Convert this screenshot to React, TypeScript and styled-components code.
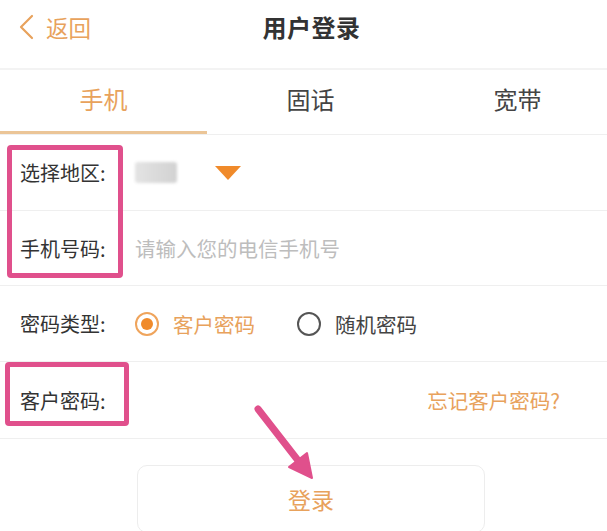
import React from "react";
import styled, { createGlobalStyle } from "styled-components";

const Global = createGlobalStyle`
  html, body { margin: 0; padding: 0; background: #fff; overflow: hidden; }
  body { font-family: "Noto Sans CJK SC", "Noto Sans", sans-serif; color: #333; }
`;

const ORANGE = "#E8A25C";
const ORANGE_STRONG = "#F08A2A";
const PINK = "#E0508C";
const LINE = "#EFEFEF";

const Page = styled.div`
  position: relative;
  width: 607px;
  height: 531px;
  overflow: hidden;
`;

const Header = styled.header`
  display: grid;
  grid-template-columns: 1fr auto 1fr;
  align-items: start;
  height: 70px;
  padding: 11px 0 0 16px;
  box-sizing: border-box;
  border-bottom: 2px solid #F3F3F3;
`;

const Back = styled.div`
  display: flex;
  align-items: center;
  gap: 12px;
  margin-left: 2px;
  color: ${ORANGE};
  font-size: 22.5px;
  line-height: 32px;
  svg { display: block; }
`;

const Title = styled.h1`
  margin: 0;
  font-size: 24px;
  font-weight: 600;
  line-height: 32px;
  color: #333;
  letter-spacing: 0.5px;
`;

const Tabs = styled.nav`
  display: grid;
  grid-template-columns: 207px 207px 207px;
  height: 65px;
  border-bottom: 1px solid ${LINE};
  box-sizing: border-box;
`;

const Tab = styled.div<{ $active?: boolean }>`
  display: flex;
  align-items: center;
  justify-content: center;
  padding-bottom: 4px;
  font-size: 24px;
  color: ${(p) => (p.$active ? ORANGE : "#444")};
  border-bottom: 3px solid ${(p) => (p.$active ? "#EBC597" : "transparent")};
`;

const Row = styled.div<{ $h: number }>`
  display: flex;
  align-items: center;
  height: ${(p) => p.$h}px;
  border-bottom: 1px solid ${LINE};
  padding: 0 47px 0 20px;
  box-sizing: border-box;
`;

const Label = styled.span`
  width: 115px;
  flex: none;
  font-size: 20px;
  color: #333;
`;

const Blurred = styled.div`
  width: 42px;
  height: 21px;
  border-radius: 3px;
  background: linear-gradient(90deg, #e4e4e4 0%, #dcdcdc 40%, #d2d2d2 100%);
  filter: blur(1.5px);
`;

const Caret = styled.div`
  margin-left: 38px;
  width: 0;
  height: 0;
  border-left: 13px solid transparent;
  border-right: 13px solid transparent;
  border-top: 14px solid ${ORANGE_STRONG};
`;

const Placeholder = styled.span`
  font-size: 20.5px;
  color: #BDBDBD;
`;

const RadioGroup = styled.div`
  display: flex;
  align-items: center;
  gap: 42px;
`;

const RadioItem = styled.label<{ $checked?: boolean }>`
  display: flex;
  align-items: center;
  gap: 14px;
  font-size: 20.5px;
  color: ${(p) => (p.$checked ? ORANGE : "#444")};
`;

const RadioCircle = styled.span<{ $checked?: boolean }>`
  width: 24px;
  height: 24px;
  box-sizing: border-box;
  border-radius: 50%;
  border: 2px solid ${(p) => (p.$checked ? "#EFA45C" : "#555")};
  display: flex;
  align-items: center;
  justify-content: center;
  &::after {
    content: "";
    display: ${(p) => (p.$checked ? "block" : "none")};
    width: 12px;
    height: 12px;
    border-radius: 50%;
    background: ${ORANGE_STRONG};
  }
`;

const Forgot = styled.span`
  margin-left: auto;
  font-size: 20.5px;
  color: ${ORANGE};
`;

const LoginButton = styled.button`
  display: flex;
  align-items: center;
  justify-content: center;
  margin: 26px 0 0 137px;
  width: 348px;
  height: 68px;
  border: 1px solid #EDEDED;
  border-radius: 10px;
  background: #fff;
  font-family: inherit;
  font-size: 23px;
  color: ${ORANGE};
  padding: 0;
`;

const Mark = styled.div<{ $l: number; $t: number; $w: number; $h: number }>`
  position: absolute;
  left: ${(p) => p.$l}px;
  top: ${(p) => p.$t}px;
  width: ${(p) => p.$w}px;
  height: ${(p) => p.$h}px;
  border: 5px solid ${PINK};
  border-radius: 4px;
  box-sizing: border-box;
  pointer-events: none;
`;

const ArrowSvg = styled.svg`
  position: absolute;
  left: 0;
  top: 0;
  pointer-events: none;
`;

export default function App() {
  return (
    <Page>
      <Global />
      <Header>
        <Back>
          <svg width="16" height="26" viewBox="0 0 16 26">
            <path d="M14 2 L3 13 L14 24" fill="none" stroke={ORANGE} strokeWidth="2.2" strokeLinecap="round" strokeLinejoin="round" />
          </svg>
          返回
        </Back>
        <Title>用户登录</Title>
        <div />
      </Header>
      <Tabs>
        <Tab $active>手机</Tab>
        <Tab>固话</Tab>
        <Tab>宽带</Tab>
      </Tabs>
      <Row $h={76}>
        <Label>选择地区:</Label>
        <Blurred />
        <Caret />
      </Row>
      <Row $h={75}>
        <Label>手机号码:</Label>
        <Placeholder>请输入您的电信手机号</Placeholder>
      </Row>
      <Row $h={76}>
        <Label>密码类型:</Label>
        <RadioGroup>
          <RadioItem $checked>
            <RadioCircle $checked />
            客户密码
          </RadioItem>
          <RadioItem>
            <RadioCircle />
            随机密码
          </RadioItem>
        </RadioGroup>
      </Row>
      <Row $h={77}>
        <Label>客户密码:</Label>
        <Forgot>忘记客户密码?</Forgot>
      </Row>
      <LoginButton>登录</LoginButton>

      <Mark $l={7} $t={145} $w={116} $h={133} />
      <Mark $l={5} $t={362} $w={124} $h={64} />
      <ArrowSvg width="607" height="531" viewBox="0 0 607 531">
        <line x1="258" y1="409" x2="300" y2="463" stroke={PINK} strokeWidth="7" strokeLinecap="round" />
        <polygon points="312,478 289,467 307,453" fill={PINK} stroke={PINK} strokeWidth="2" strokeLinejoin="round" />
      </ArrowSvg>
    </Page>
  );
}
